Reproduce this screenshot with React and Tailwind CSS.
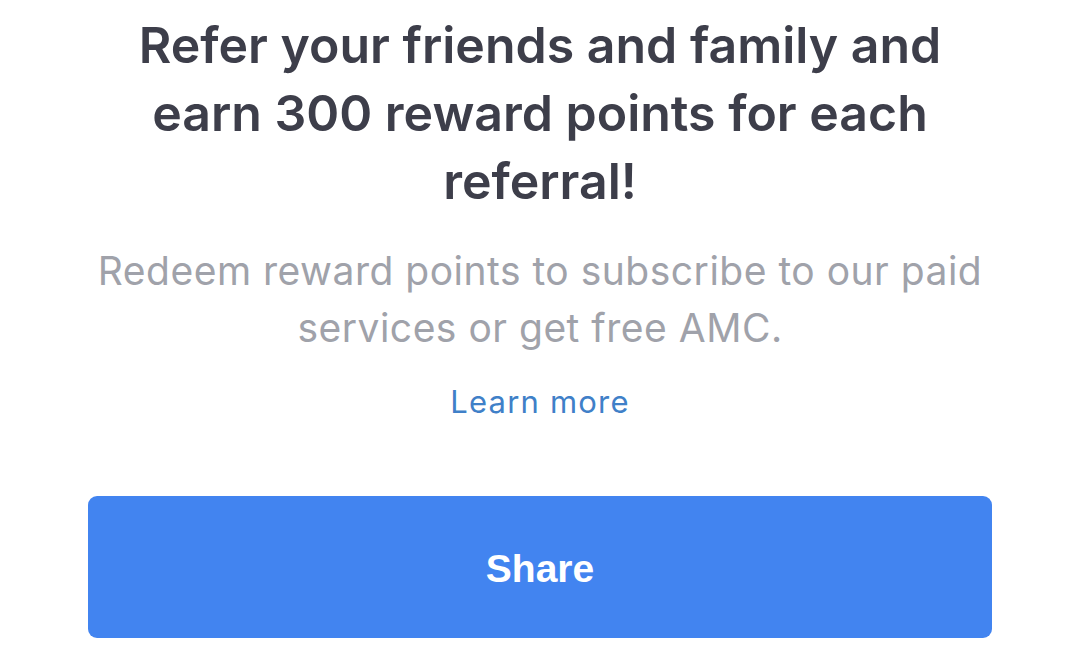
import React from 'react';

export default function App() {
  return (
    <div className="flex h-[659px] w-[1080px] flex-col items-center bg-white px-[88px] pt-[11px]" style={{ fontFamily: 'Inter, "Noto Sans", sans-serif' }}>
      <h1 className="text-center text-[50px] font-semibold leading-[68px] text-[#3d3e4a]">
        Refer your friends and family and
        <br />
        earn 300 reward points for each
        <br />
        referral!
      </h1>
      <p className="mt-[27px] text-center text-[39px] leading-[57px] tracking-[0.5px] text-[#a0a2aa]">
        Redeem reward points to subscribe to our paid
        <br />
        services or get free AMC.
      </p>
      <a href="#" className="mt-[26px] text-[31px] leading-[40px] tracking-[1.2px] text-[#3f80c8]">
        Learn more
      </a>
      <button
        type="button"
        className="mt-[74px] flex h-[142px] w-full items-center justify-center rounded-[9px] bg-[#4284f0] pt-[4px] text-[39px] font-bold text-white"
        style={{ fontFamily: '"Liberation Sans", Arial, sans-serif' }}
      >
        Share
      </button>
    </div>
  );
}
